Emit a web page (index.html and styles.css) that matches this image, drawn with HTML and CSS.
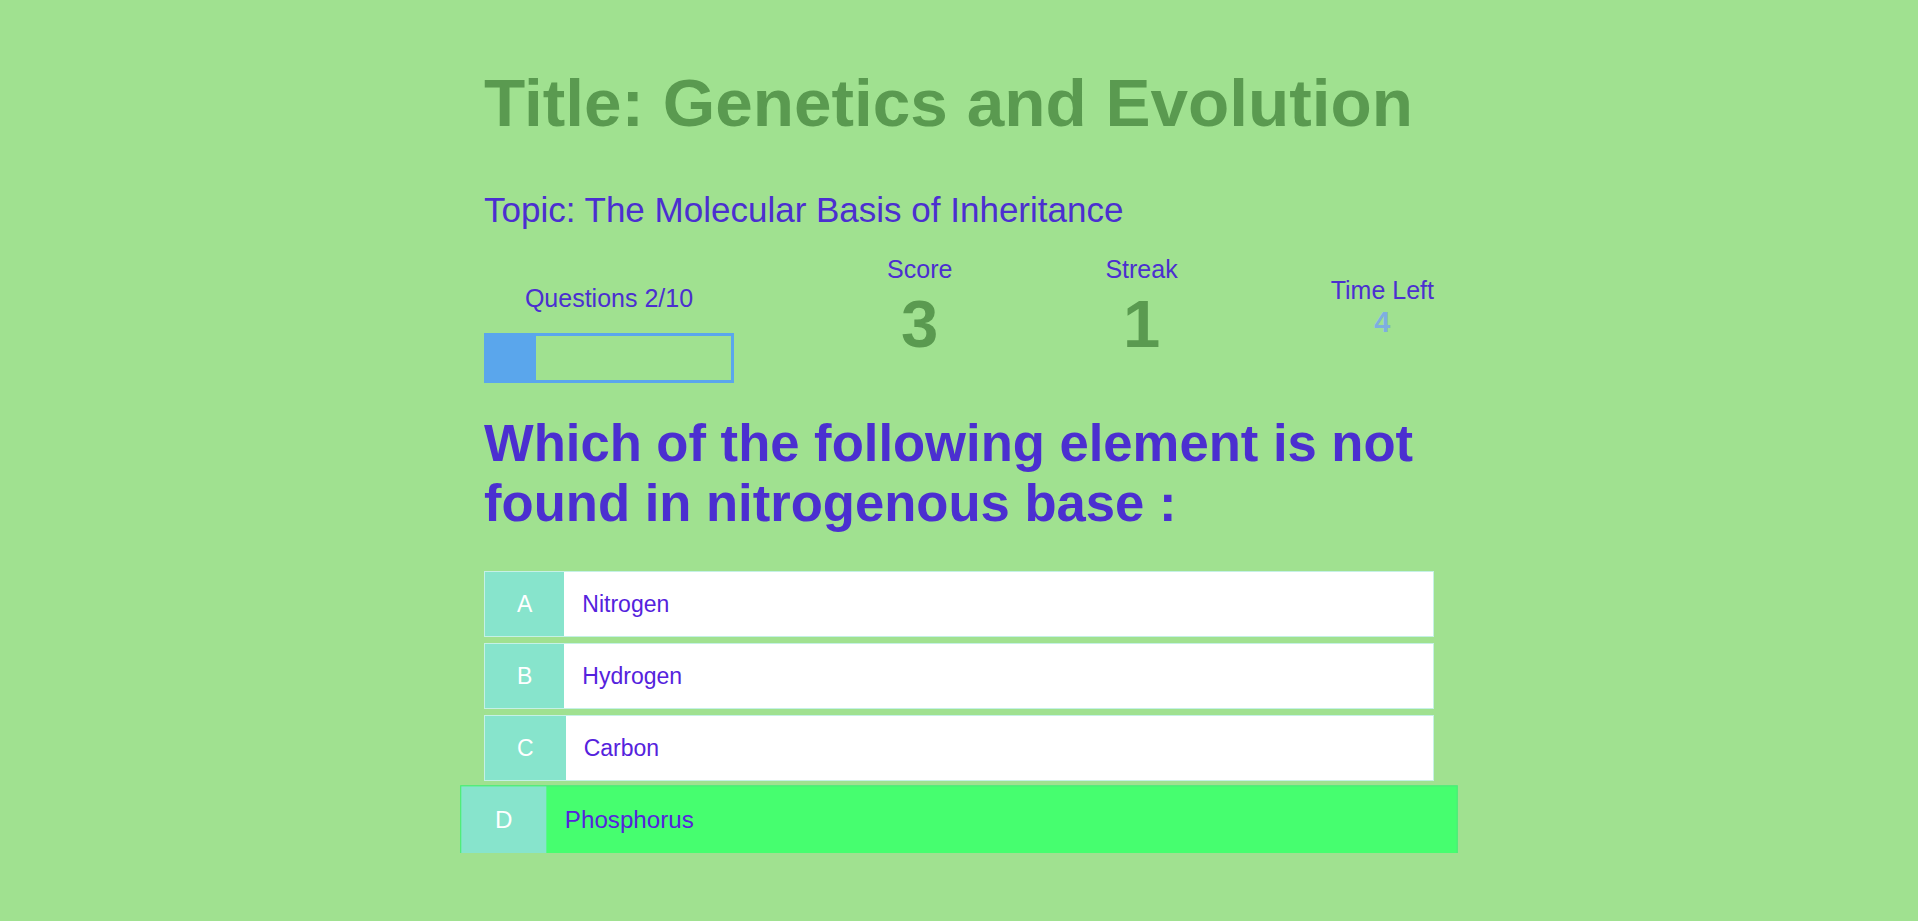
FILE: index.html
```html
<!DOCTYPE html>
<html lang="en">
<head>
<meta charset="utf-8">
<title>Quiz</title>
<link rel="stylesheet" href="styles.css">
</head>
<body>
<main class="quiz">
  <h1 class="title">Title: Genetics and Evolution</h1>
  <h2 class="topic">Topic: The Molecular Basis of Inheritance</h2>

  <section class="stats">
    <div class="stat stat-progress">
      <div class="stat-label">Questions 2/10</div>
      <div class="progress"><div class="progress-fill" style="width: 20%"></div></div>
    </div>
    <div class="stat stat-score">
      <div class="stat-label">Score</div>
      <div class="stat-value">3</div>
    </div>
    <div class="stat stat-score">
      <div class="stat-label">Streak</div>
      <div class="stat-value">1</div>
    </div>
    <div class="stat stat-time">
      <div class="stat-label">Time Left</div>
      <div class="time-value">4</div>
    </div>
  </section>

  <h2 class="question">Which of the following element is not found in nitrogenous base :</h2>

  <ul class="options">
    <li class="option"><span class="option-letter">A</span><span class="option-text">Nitrogen</span></li>
    <li class="option"><span class="option-letter">B</span><span class="option-text">Hydrogen</span></li>
    <li class="option"><span class="option-letter">C</span><span class="option-text">Carbon</span></li>
    <li class="option option-active"><span class="option-letter">D</span><span class="option-text">Phosphorus</span></li>
  </ul>
</main>
</body>
</html>
```

FILE: styles.css
```css
* {
  box-sizing: border-box;
}

html, body {
  margin: 0;
  padding: 0;
}

body {
  background: #a0e190;
  font-family: "Liberation Sans", Arial, sans-serif;
  color: #4b2fd0;
}

.quiz {
  width: 950px;
  margin: 0 auto;
  padding-top: 64px;
  display: flex;
  flex-direction: column;
}

.title {
  margin: 0;
  font-size: 67.5px;
  line-height: 77px;
  font-weight: 700;
  color: #5a9a50;
}

.topic {
  margin: 49px 0 0;
  font-size: 35px;
  line-height: 40px;
  font-weight: 400;
  color: #4b2fd0;
}

.stats {
  margin-top: 25px;
  display: flex;
  justify-content: space-between;
  align-items: flex-start;
}

.stat {
  display: flex;
  flex-direction: column;
  align-items: center;
}

.stat-label {
  font-size: 25px;
  line-height: 29px;
  color: #4b2fd0;
}

.stat-progress {
  margin-top: 29px;
}

.stat-progress .stat-label {
  margin-bottom: 20px;
}

.progress {
  width: 250px;
  height: 50px;
  border: 3px solid #5aa6ec;
}

.progress-fill {
  height: 100%;
  background: #5aa6ec;
}

.stat-value {
  margin-top: 6px;
  font-size: 67px;
  line-height: 67px;
  font-weight: 700;
  color: #5a9a50;
}

.stat-time {
  margin-top: 21px;
}

.time-value {
  margin-top: 1px;
  font-size: 28.8px;
  line-height: 33px;
  font-weight: 700;
  color: #7eaee0;
}

.question {
  margin: 30px 0 0;
  font-size: 52.6px;
  line-height: 60px;
  font-weight: 700;
  color: #4b2fd0;
}

.options {
  list-style: none;
  margin: 38px 0 0;
  padding: 0;
  display: flex;
  flex-direction: column;
  gap: 6px;
}

.option {
  display: flex;
  align-items: stretch;
  height: 66px;
  background: #ffffff;
  border: 1px solid #c5f1e6;
  font-size: 23px;
}

.option-letter {
  display: flex;
  align-items: center;
  padding: 0 32px;
  background: #87e4cc;
  color: #ffffff;
}

.option-text {
  display: flex;
  align-items: center;
  padding-left: 18px;
  color: #5522dd;
}

.option-active {
  background: #46fe6f;
  border-color: #4fe77b;
  transform: scale(1.05);
}
```
